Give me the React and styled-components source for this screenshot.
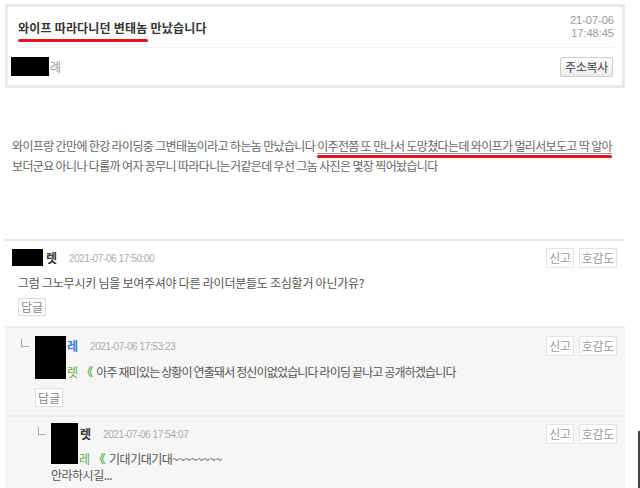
import React from 'react';
import styled, { createGlobalStyle } from 'styled-components';

const Global = createGlobalStyle`
  html, body { margin: 0; padding: 0; background: #fff; }
  body {
    font-family: "Noto Sans CJK KR", "Noto Sans", sans-serif;
    font-size: 12px;
    color: #555;
  }
  * { box-sizing: border-box; }
`;

const Page = styled.div`
  position: relative;
  width: 640px;
  height: 488px;
  overflow: hidden;
  padding: 4px 0 0 5px;
`;

const PostBox = styled.div`
  width: 620px;
  border: 3px solid #e9e9e9;
  background: #fff;
`;

const PostHead = styled.div`
  display: flex;
  justify-content: space-between;
  align-items: center;
  height: 41px;
  margin: 0 8px 0 10px;
  border-bottom: 1px solid #f0f0f0;
`;

const Title = styled.h1`
  margin: 0;
  font-size: 12px;
  font-weight: bold;
  color: #333;
  letter-spacing: 0.2px;
`;

const Marker = styled.span`
  position: relative;
  &::after {
    content: '';
    position: absolute;
    left: 0;
    right: 0;
    bottom: ${p => p.$bottom || -5}px;
    height: 3px;
    border-radius: 2px;
    background: #e8121c;
  }
`;

const PostDate = styled.div`
  font-family: "Liberation Sans", Arial, sans-serif;
  font-size: 11px;
  line-height: 13px;
  color: #999;
  text-align: right;
`;

const PostMeta = styled.div`
  display: flex;
  justify-content: space-between;
  align-items: center;
  height: 37px;
  padding: 0 9px 0 3px;
`;

const NameWrap = styled.span`
  position: relative;
  display: inline-block;
  padding-left: ${p => p.$hide}px;
  font-weight: ${p => (p.$bold ? 'bold' : 'normal')};
  color: ${p => p.$color || '#333'};
  line-height: 16px;
`;

const Redact = styled.span`
  position: absolute;
  left: ${p => p.$left || 0}px;
  top: ${p => p.$top}px;
  width: ${p => p.$w}px;
  height: ${p => p.$h}px;
  background: #000;
  z-index: 2;
`;

const CopyButton = styled.button`
  height: 20px;
  padding: 0 4px;
  border: 1px solid #ccc;
  border-radius: 2px;
  background: linear-gradient(#fff, #ececec);
  font-family: "Noto Sans CJK KR", sans-serif;
  font-size: 12px;
  letter-spacing: -0.3px;
  color: #444;
  line-height: 18px;
`;

const Article = styled.div`
  margin: 48px 0 0 7px;
  line-height: 20px;
  color: #666;
  letter-spacing: -0.65px;
  height: 103px;
`;

const Link = styled.span`
  text-decoration: underline;
  text-decoration-color: #999;
  text-underline-offset: 2px;
`;

const Comments = styled.div`
  width: 620px;
  border-top: 2px solid #e8e8e8;
`;

const CommentBlock = styled.div`
  position: relative;
  padding: ${p => p.$pt}px 8px ${p => p.$pb}px ${p => p.$pl}px;
  background: ${p => (p.$reply ? '#f6f6f6' : '#fff')};
  border-top: ${p => (p.$reply ? '2px solid #ececec' : 'none')};
`;

const Head = styled.div`
  display: flex;
  align-items: center;
  height: 20px;
`;

const Corner = styled.span`
  width: 8px;
  height: 8px;
  margin: -7px 5px 0 0;
  border-left: 1px solid #aaa;
  border-bottom: 1px solid #aaa;
`;

const DateText = styled.span`
  margin-left: 12px;
  font-family: "Liberation Sans", Arial, sans-serif;
  font-size: 10px;
  letter-spacing: -0.4px;
  color: #aaa;
`;

const Tools = styled.div`
  display: flex;
  gap: 5px;
  margin-left: auto;
`;

const ToolButton = styled.button`
  height: 20px;
  padding: 0 2px;
  border: 1px solid #e2e2e2;
  background: #fff;
  font-family: "Noto Sans CJK KR", sans-serif;
  font-size: 12px;
  letter-spacing: -0.3px;
  color: #999;
  line-height: 18px;
`;

const Body = styled.div`
  margin: ${p => p.$mt}px 0 0 ${p => p.$ml}px;
  line-height: ${p => p.$lh || 16}px;
  color: #555;
  letter-spacing: ${p => p.$ls}px;
  white-space: pre-line;
`;

const Green = styled.span`
  position: relative;
  display: inline-block;
  padding-left: ${p => p.$hide}px;
  color: #5fae4f;
`;

const Quote = styled.span`
  color: #5fae4f;
  font-weight: bold;
  margin: 0 4px;
`;

const ReplyButton = styled.button`
  display: block;
  height: ${p => p.$h || 18}px;
  margin: ${p => p.$mt}px 0 0 ${p => p.$ml}px;
  padding: 0 2px;
  border: 1px solid #ddd;
  background: #fff;
  font-family: "Noto Sans CJK KR", sans-serif;
  font-size: 12px;
  color: #888;
  line-height: 16px;
`;

const EdgeLine = styled.div`
  position: absolute;
  right: 0;
  top: 431px;
  width: 2px;
  height: 57px;
  background: #444;
`;

function Buttons() {
  return (
    <Tools>
      <ToolButton>신고</ToolButton>
      <ToolButton>호감도</ToolButton>
    </Tools>
  );
}

export default function App() {
  return (
    <>
      <Global />
      <Page>
        <PostBox>
          <PostHead>
            <Title>
              <Marker $bottom={-6}>와이프 따라다니던 변태놈</Marker> 만났습니다
            </Title>
            <PostDate>
              21-07-06
              <br />
              17:48:45
            </PostDate>
          </PostHead>
          <PostMeta>
            <NameWrap $hide={39} $color="#999">
              <Redact $top={-2} $w={38} $h={19} />례
            </NameWrap>
            <CopyButton>주소복사</CopyButton>
          </PostMeta>
        </PostBox>

        <Article>
          와이프랑 간만에 한강 라이딩중 그변태놈이라고 하는놈 만났습니다{' '}
          <Marker $bottom={-4}>
            <Link>이주전쯤 또 만나서 도망쳤다는데 와이프가 멀리서보도고 딱 알아</Link>
          </Marker>
          <br />
          보더군요 아니나 다를까 여자 꽁무니 따라다니는거같은데 우선 그놈 사진은 몇장 찍어놨습니다
        </Article>

        <Comments>
          <CommentBlock $pt={7} $pb={10} $pl={7}>
            <Head>
              <NameWrap $hide={34} $bold>
                <Redact $top={-1} $w={31} $h={17} />렛
              </NameWrap>
              <DateText>2021-07-06 17:50:00</DateText>
              <Buttons />
            </Head>
            <Body $mt={7} $ml={6} $ls={-0.25}>
              그럼 그노무시키 님을 보여주셔야 다른 라이더분들도 조심할거 아닌가유?
            </Body>
            <ReplyButton $mt={7} $ml={6}>답글</ReplyButton>
          </CommentBlock>

          <CommentBlock $reply $pt={8} $pb={8} $pl={16}>
            <Head>
              <Corner />
              <NameWrap $hide={33} $bold $color="#3b7ddd">
                <Redact $left={1} $top={-2} $w={31} $h={43} />레
              </NameWrap>
              <DateText>2021-07-06 17:53:23</DateText>
              <Buttons />
            </Head>
            <Body $mt={8} $ml={15} $ls={-0.85}>
              <Green $hide={31}>렛</Green>
              <Quote>《</Quote>아주 재미있는 상황이 연출돼서 정신이없었습니다 라이딩 끝나고 공개하겠습니다
            </Body>
            <ReplyButton $mt={8} $ml={14} $h={19}>답글</ReplyButton>
          </CommentBlock>

          <CommentBlock $reply $pt={7} $pb={20} $pl={33}>
            <Head>
              <Corner />
              <NameWrap $hide={29} $bold>
                <Redact $top={-3} $w={27} $h={41} />렛
              </NameWrap>
              <DateText>2021-07-06 17:54:07</DateText>
              <Buttons />
            </Head>
            <Body $mt={7} $ml={13} $lh={16} $ls={-0.5}>
              <Green $hide={28}>레</Green>
              <Quote>《</Quote>기대기대기대~~~~~~~~{'\n'}안라하시길...
            </Body>
          </CommentBlock>
        </Comments>
        <EdgeLine />
      </Page>
    </>
  );
}
